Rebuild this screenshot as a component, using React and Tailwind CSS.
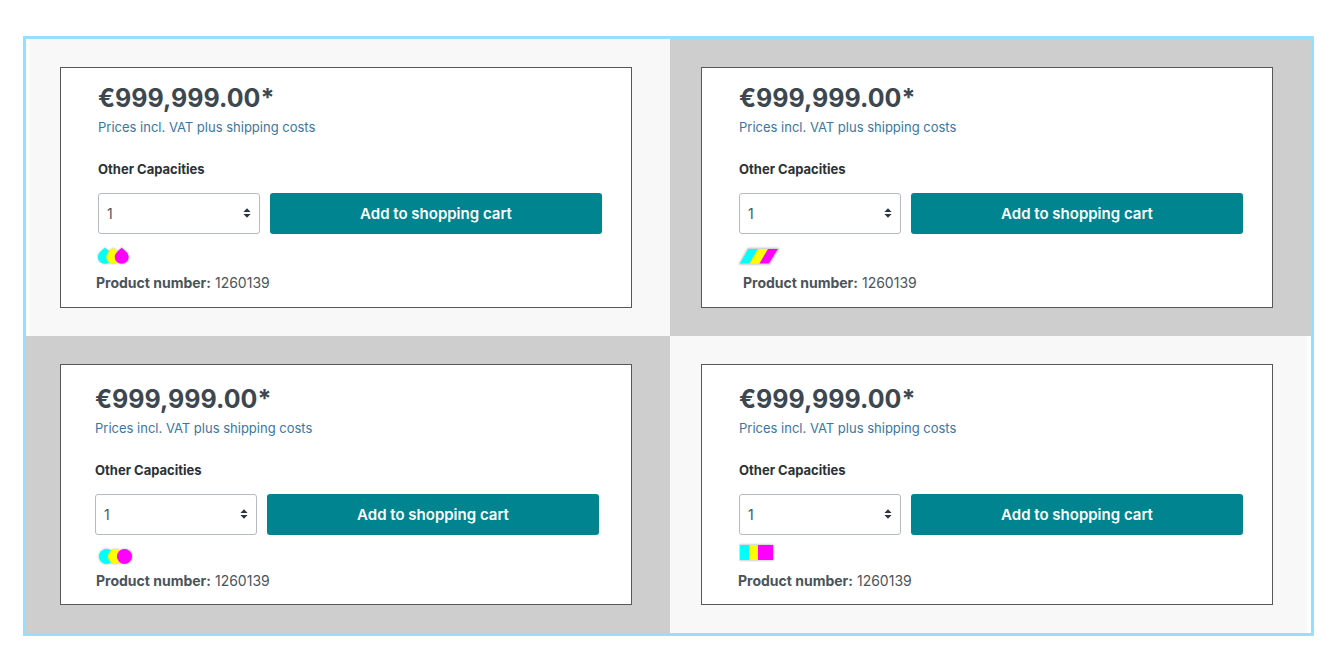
import { useId } from "react";

function DropSwatches() {
  const drop = "M8.5 1 C10 3.4 15.5 6 15.5 10.4 A7 6.8 0 0 1 1.5 10.4 C1.5 6 7 3.4 8.5 1Z";
  return (
    <svg width="34" height="20" viewBox="0 0 34 20" className="drop-shadow-[0_0_1px_rgba(0,0,0,0.3)]" aria-hidden="true">
      <path d={drop} fill="#00ffff" transform="translate(-0.5 1.5)" />
      <path d={drop} fill="#ffff00" transform="translate(7.8 1.5)" />
      <path d={drop} fill="#ff00ff" transform="translate(16.2 1.5)" />
    </svg>
  );
}

function SlantSwatches() {
  return (
    <svg width="42" height="20" viewBox="0 0 42 20" className="drop-shadow-[0_0_1px_rgba(0,0,0,0.25)]" aria-hidden="true">
      <path d="M9 3.5H39.5L30.5 19H0.5Z" fill="none" stroke="#d4d4d4" />
      <path d="M9.3 4H19L10.5 18.5H1Z" fill="#00ffff" />
      <path d="M19 4H29L20.5 18.5H10.5Z" fill="#ffff00" />
      <path d="M29 4H38.8L30 18.5H20.5Z" fill="#ff00ff" />
    </svg>
  );
}

function DotSwatches() {
  return (
    <svg width="36" height="20" viewBox="0 0 36 20" className="drop-shadow-[0_0_1px_rgba(0,0,0,0.3)]" aria-hidden="true">
      <circle cx="8.5" cy="10.5" r="7.6" fill="#00ffff" />
      <circle cx="17.5" cy="10.5" r="7.6" fill="#ffff00" />
      <circle cx="26.5" cy="10.5" r="7.6" fill="#ff00ff" />
    </svg>
  );
}

function SquareSwatches() {
  return (
    <svg width="36" height="20" viewBox="0 0 36 20" aria-hidden="true">
      <rect x="0.5" y="2.5" width="34" height="16" fill="#dcdcdc" className="drop-shadow-[0_0_1px_rgba(0,0,0,0.25)]" />
      <rect x="1" y="3" width="9" height="15" fill="#00ffff" />
      <rect x="10" y="3" width="9" height="15" fill="#ffff00" />
      <rect x="19" y="3" width="15" height="15" fill="#ff00ff" />
    </svg>
  );
}

function BuyBox({ className, formClass, swatchClass, numberClass, children }) {
  const id = useId();
  return (
    <section className={`border border-[#58585a] bg-white ${className}`}>
      <div className={formClass}>
        <p className="text-[25px] leading-8 font-bold text-[#3d4750]">€999,999.00*</p>
        <a href="#shipping" className="mt-[3px] block text-[13px] leading-5 text-[#3a76a3]">
          Prices incl. VAT plus shipping costs
        </a>
        <label htmlFor={id} className="mt-[22px] block text-[13px] leading-5 font-bold text-[#2b3136]">
          Other Capacities
        </label>
        <div className="mt-3.5 flex gap-2.5">
          <div className="relative w-[162px] shrink-0">
            <select
              id={id}
              defaultValue="1"
              className="h-[41px] w-full appearance-none rounded-[3px] border border-[#b5bac3] bg-white px-2 text-sm text-[#4a545b]"
            >
              <option>1</option>
              <option>2</option>
              <option>3</option>
            </select>
            <svg width="8" height="10" viewBox="0 0 8 10" className="pointer-events-none absolute top-[15px] right-[9px]" aria-hidden="true">
              <path d="M4 0.3 7.6 4H0.4ZM0.4 6H7.6L4 9.7Z" fill="#2b3740" />
            </svg>
          </div>
          <button type="button" className="h-[41px] flex-1 rounded-[3px] bg-[#008490] pt-0.5 text-[15px] font-semibold text-white">
            Add to shopping cart
          </button>
        </div>
      </div>
      <div className={swatchClass}>{children}</div>
      <p className={`text-sm leading-5 text-[#4a545b] ${numberClass}`}>
        <strong className="font-bold">Product number:</strong> 1260139
      </p>
    </section>
  );
}

export default function App() {
  return (
    <main className="pt-9 pr-[18px] pb-5 pl-[23px] font-['Inter',sans-serif]">
      <div className="grid grid-cols-[644fr_641fr] border-[3px] border-[#99defd]">
        <div className="border-l-[3px] border-white bg-[#f8f8f8] py-7 pr-[38px] pl-[31px]">
          <BuyBox
            className="pt-3.5 pb-3.5"
            formClass="pr-[29px] pl-[37px]"
            swatchClass="mt-[11px] mb-2 flex h-5 pl-9"
            numberClass="pl-[35px]"
          >
            <DropSwatches />
          </BuyBox>
        </div>
        <div className="bg-[#cecece] py-7 pr-[38px] pl-[31px]">
          <BuyBox
            className="pt-3.5 pb-3.5"
            formClass="pr-[29px] pl-[37px]"
            swatchClass="mt-[11px] mb-2 flex h-5 pl-[37px]"
            numberClass="pl-[41px]"
          >
            <SlantSwatches />
          </BuyBox>
        </div>
        <div className="bg-[#cecece] py-7 pr-[38px] pl-[34px]">
          <BuyBox
            className="pt-[18px] pb-[13px]"
            formClass="pr-8 pl-[34px]"
            swatchClass="mt-[11px] mb-[5px] flex h-5 pl-[37px]"
            numberClass="pl-[35px]"
          >
            <DotSwatches />
          </BuyBox>
        </div>
        <div className="border-r-4 border-white bg-[#f8f8f8] py-7 pr-[34px] pl-[31px]">
          <BuyBox
            className="pt-[18px] pb-[13px]"
            formClass="pr-[29px] pl-[37px]"
            swatchClass="mt-[7px] mb-[9px] flex h-5 pl-[37px]"
            numberClass="pl-9"
          >
            <SquareSwatches />
          </BuyBox>
        </div>
      </div>
    </main>
  );
}
